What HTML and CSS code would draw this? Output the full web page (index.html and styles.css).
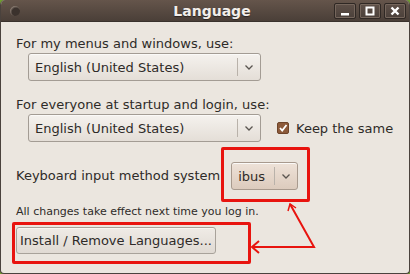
FILE: index.html
```html
<!DOCTYPE html>
<html lang="en">
<head>
    <meta charset="UTF-8">
    <title>Language</title>
    <link rel="stylesheet" href="styles.css">
</head>
<body>
    <div class="window">
        <div class="titlebar">
            <span class="win-menu"></span>
            <span class="win-title">Language</span>
            <div class="win-buttons">
                <span class="win-btn"><svg width="10" height="10" viewBox="0 0 10 10"><rect x="1" y="7" width="8" height="2.5" fill="#fff"/></svg></span>
                <span class="win-btn"><svg width="10" height="10" viewBox="0 0 10 10"><rect x="1.5" y="1.5" width="7" height="7" fill="none" stroke="#fff" stroke-width="2"/></svg></span>
                <span class="win-btn"><svg width="10" height="10" viewBox="0 0 10 10"><path d="M1.5 1.5 L8.5 8.5 M8.5 1.5 L1.5 8.5" stroke="#fff" stroke-width="2.4"/></svg></span>
            </div>
        </div>

        <div class="content">
            <p class="label">For my menus and windows, use:</p>
            <div class="row indent">
                <div class="combo wide">
                    <span class="combo-text">English (United States)</span>
                    <span class="combo-arrow">
                        <svg width="8" height="5" viewBox="0 0 8 5"><path d="M0.5 0.5 L4 4 L7.5 0.5" fill="none" stroke="#5a5550" stroke-width="1.3"/></svg>
                    </span>
                </div>
            </div>

            <p class="label second">For everyone at startup and login, use:</p>
            <div class="row indent">
                <div class="combo wide">
                    <span class="combo-text">English (United States)</span>
                    <span class="combo-arrow">
                        <svg width="8" height="5" viewBox="0 0 8 5"><path d="M0.5 0.5 L4 4 L7.5 0.5" fill="none" stroke="#5a5550" stroke-width="1.3"/></svg>
                    </span>
                </div>
                <label class="check">
                    <span class="check-box">
                        <svg width="10" height="10" viewBox="0 0 10 10"><path d="M2 5 L4.2 7.5 L8.5 2" fill="none" stroke="#fff" stroke-width="1.8"/></svg>
                    </span>
                    Keep the same
                </label>
            </div>

            <div class="row keyboard">
                <span class="label">Keyboard input method system</span>
                <div class="combo small hot">
                    <span class="combo-text">ibus</span>
                    <span class="combo-arrow">
                        <svg width="8" height="5" viewBox="0 0 8 5"><path d="M0.5 0.5 L4 4 L7.5 0.5" fill="none" stroke="#5a5550" stroke-width="1.3"/></svg>
                    </span>
                </div>
            </div>

            <p class="note">All changes take effect next time you log in.</p>

            <button class="install">Install / Remove Languages...</button>
        </div>

        <!-- annotations -->
        <div class="mark mark-ibus"></div>
        <div class="mark mark-install"></div>
        <svg class="arrow" width="410" height="274" viewBox="0 0 410 274">
            <path d="M290 204 L314 247 L252 247" fill="none" stroke="#e8140f" stroke-width="2"/>
            <path d="M259 241 L252 247 L259 253" fill="none" stroke="#e8140f" stroke-width="2"/>
            <path d="M288 211 L290 204 L296 208" fill="none" stroke="#e8140f" stroke-width="1.5"/>
        </svg>
    </div>
</body>
</html>
```

FILE: styles.css
```css
* {
    margin: 0;
    padding: 0;
    box-sizing: border-box;
}

body {
    background: #6f9d2e;
    font-family: "DejaVu Sans", sans-serif;
    color: #2e2b28;
}

/* Window frame */
.window {
    position: relative;
    width: 410px;
    height: 274px;
    background: #ebe6df;
    border: 1px solid #4a423d;
    border-top: none;
    border-radius: 5px 5px 4px 4px;
    overflow: hidden;
}

.titlebar {
    height: 22px;
    background: linear-gradient(to bottom, #65554b, #4a3f38);
    border-bottom: 1px solid #3a322d;
    display: flex;
    align-items: center;
    padding: 0 3px 0 9px;
}

.win-menu {
    width: 10px;
    height: 10px;
    border-radius: 50%;
    background: radial-gradient(circle at 60% 60%, #3b322d 45%, #8a7c72 70%, #4a3f39 90%);
}

.win-title {
    flex: 1;
    text-align: center;
    color: #f2eeea;
    font-weight: bold;
    font-size: 14px;
    text-shadow: 0 1px 1px #2a231f;
    padding-left: 70px;
}

.win-buttons {
    display: flex;
    gap: 3px;
}

.win-btn {
    width: 22px;
    height: 16px;
    border: 1px solid #2f2824;
    border-radius: 2px;
    box-shadow: inset 0 0 0 1px #75665c;
    background: linear-gradient(to bottom, #5e5048, #4b403a);
    display: flex;
    align-items: center;
    justify-content: center;
}

/* Content */
.content {
    padding: 14px 0 0 15px;
    font-size: 13px;
}

.label {
    line-height: 16px;
}

.second {
    margin-top: 16px;
}

.row {
    display: flex;
    align-items: center;
}

.indent {
    padding-left: 12px;
    margin-top: 1px;
}

.combo {
    height: 28px;
    display: flex;
    align-items: stretch;
    border: 1px solid #a39c94;
    border-radius: 3px;
    background: linear-gradient(to bottom, #f5f2ee, #e4ded7);
    box-shadow: inset 0 1px 0 #fbfaf8;
}

.combo.wide {
    width: 233px;
}

.combo-text {
    flex: 1;
    display: flex;
    align-items: center;
    padding-left: 6px;
}

.combo-arrow {
    width: 23px;
    display: flex;
    align-items: center;
    justify-content: center;
    border-left: 1px solid #b9b2aa;
    margin: 4px 0;
}

.combo.small {
    width: 67px;
    margin-left: 11px;
}

.combo.hot {
    background: linear-gradient(to bottom, #eee2d8, #dccbbd);
    border-color: #a89a8e;
}

.check {
    display: flex;
    align-items: center;
    gap: 7px;
    margin-left: 16px;
    font-size: 13px;
}

.check-box {
    width: 12px;
    height: 12px;
    border-radius: 2px;
    background: #8c5a3a;
    border: 1px solid #6e4429;
    display: flex;
    align-items: center;
    justify-content: center;
}

.keyboard {
    margin-top: 20px;
}

.note {
    font-size: 11px;
    margin-top: 15px;
}

.install {
    margin-top: 9px;
    height: 27px;
    width: 200px;
    font-family: "DejaVu Sans", sans-serif;
    font-size: 13px;
    color: #2e2b28;
    border: 1px solid #a8a29a;
    border-radius: 3px;
    background: linear-gradient(to bottom, #efebe6, #e0dad3);
    box-shadow: inset 0 1px 0 #f8f6f3;
}

/* Red annotation marks */
.mark {
    position: absolute;
    border: 3px solid #e8140f;
    border-radius: 2px;
}

.mark-ibus {
    left: 220px;
    top: 147px;
    width: 89px;
    height: 55px;
}

.mark-install {
    left: 11px;
    top: 222px;
    width: 239px;
    height: 42px;
}

.arrow {
    position: absolute;
    left: -1px;
    top: 0;
}
```
